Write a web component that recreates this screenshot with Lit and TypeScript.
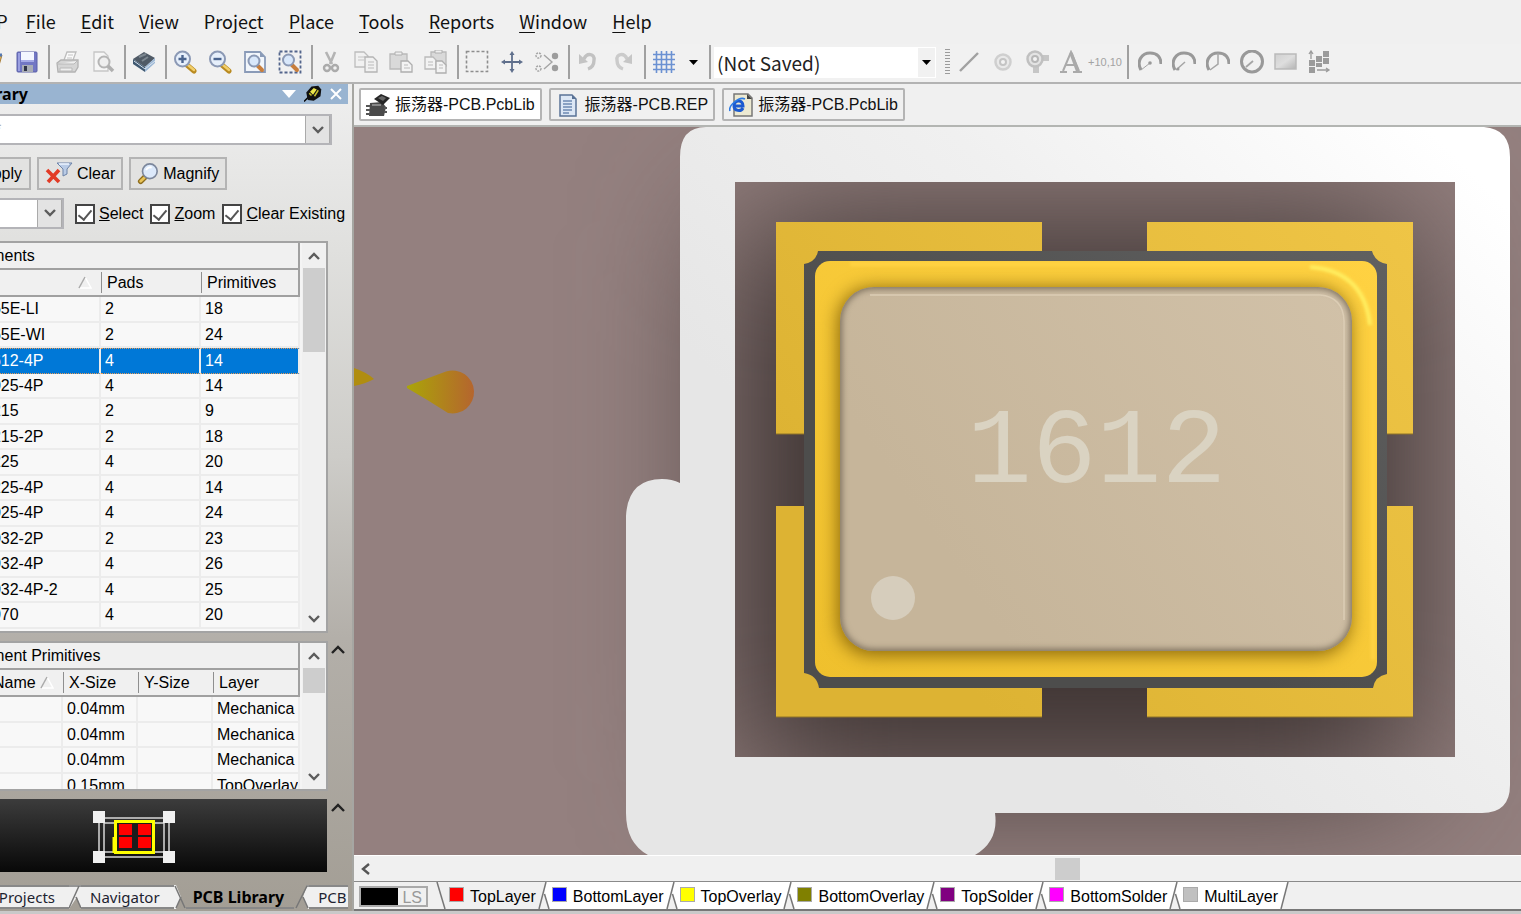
import { LitElement, html, css, svg, nothing } from "lit";
import { customElement, property } from "lit/decorators.js";
import { classMap } from "lit/directives/class-map.js";

const page = svg`<path d="M5 2h8l5 5v13H5z" fill="#f4f4f4" stroke="#b4b4b4" stroke-width="1.3"/>`;

const ICONS: Record<string, unknown> = {
  open: svg`<path d="M2 9h14l6-4-4 14H2z" fill="#e0b860" stroke="#a87d38"/><path d="M14 5h8" stroke="#5578b0" stroke-width="3"/>`,
  save: svg`<rect x="2" y="2" width="20" height="20" rx="1" fill="#7277c4" stroke="#5a60a8"/><rect x="6" y="2" width="13" height="9" fill="#f3f6ff"/><path d="M6 11h13" stroke="#a5aae6" stroke-width="2"/><rect x="7" y="15" width="11" height="7" fill="#a9adb5"/><rect x="9" y="16" width="3" height="5" fill="#2f3448"/><path d="M4 3v18" stroke="#a9adea" stroke-width="1.5"/>`,
  print: svg`<path d="M8 10 11 2h9l-3 8" fill="#fafafa" stroke="#bdbdbd" stroke-width="1.3"/><path d="M12 5h5M11 8h5" stroke="#c4c4c4"/><path d="M1 13 5 10h17v7l-3 5H2z" fill="#d5d5d5" stroke="#b2b2b2" stroke-width="1.3"/><path d="M2 14h16l3-3M4 18h12v3H4z" fill="#efefef" stroke="#b9b9b9"/>`,
  preview: svg`<path d="M3 2h10l4 4v15H3z" fill="#f6f6f6" stroke="#c6c6c6" stroke-width="1.3"/><circle cx="13" cy="12" r="5.5" fill="#efefef" stroke="#b5b5b5" stroke-width="2"/><path d="m17 16 5 5" stroke="#b0b0b0" stroke-width="3.5"/>`,
  book: svg`<path d="m1 9 11-7 11 6-10 9z" fill="#4f5a66"/><path d="m1 9 12 8v5L1 14z" fill="#3f5871"/><path d="m13 17 10-9v5l-10 9z" fill="#9db8d5"/><path d="m2 11 11 8 10-8" fill="none" stroke="#d9e4ef"/><path d="m7 7 7-3M10 11l6-4" stroke="#7c8790" stroke-width="2"/>`,
  zoomIn: svg`<path d="m14 15 7 6" stroke="#b98a20" stroke-width="5" stroke-linecap="round"/><path d="m15 15 6 5" stroke="#f2cf6b" stroke-width="2.4" stroke-linecap="round"/><circle cx="9.500" cy="9" r="7.500" fill="#e6effb" stroke="#8b99b5" stroke-width="2"/><path d="M5.500 9h8M9.500 5v8" stroke="#4a648f" stroke-width="2.400"/>`,
  zoomOut: svg`<path d="m14 15 7 6" stroke="#b98a20" stroke-width="5" stroke-linecap="round"/><path d="m15 15 6 5" stroke="#f2cf6b" stroke-width="2.4" stroke-linecap="round"/><circle cx="9.500" cy="9" r="7.500" fill="#e6effb" stroke="#8b99b5" stroke-width="2"/><path d="M5.500 9h8" stroke="#4a648f" stroke-width="2.400"/>`,
  zoomPage: svg`<path d="M2 2h15l5 5v15H2z" fill="#f2f6fb" stroke="#8a9bb8" stroke-width="1.800"/><path d="M17 2v5h5" fill="#8a9bb8"/><path d="m14 15 5 5" stroke="#c87e3c" stroke-width="4" stroke-linecap="round"/><circle cx="11" cy="11" r="5.500" fill="#d9e8fb" stroke="#8b99b5" stroke-width="2"/>`,
  zoomSel: svg`<rect x="1.500" y="1.500" width="21" height="21" fill="none" stroke="#53658c" stroke-width="1.800" stroke-dasharray="3 2"/><path d="m14 15 5 5" stroke="#c87e3c" stroke-width="4" stroke-linecap="round"/><circle cx="10.500" cy="10" r="5.500" fill="#d9e8fb" stroke="#8b99b5" stroke-width="2"/>`,
  cut: svg`<path d="m7 2 6 12M16 2l-5 12" stroke="#b4b4b4" stroke-width="2.600"/><circle cx="8" cy="18" r="3" fill="none" stroke="#ababab" stroke-width="2.400"/><circle cx="16" cy="18" r="3" fill="none" stroke="#ababab" stroke-width="2.400"/>`,
  copy: svg`<path d="M1 2h9l4 4v11H1z" fill="#f1f1f1" stroke="#bdbdbd" stroke-width="1.300"/><path d="M4 7h7M4 10h6" stroke="#c5c5c5"/><path d="M11 7h8l4 4v11H11z" fill="#f1f1f1" stroke="#b4b4b4" stroke-width="1.300"/><path d="M14 12h6M14 15h6M14 18h6" stroke="#bbb"/>`,
  paste: svg`<path d="M1 4h17v15H1z" fill="#d9d9d9" stroke="#b9b9b9" stroke-width="1.300"/><path d="M6 5V2h7v3z" fill="#efefef" stroke="#b0b0b0"/><path d="M12 11h7l4 4v7H12z" fill="#f3f3f3" stroke="#aeaeae" stroke-width="1.300"/><path d="M15 15h4M15 18h6" stroke="#bbb"/>`,
  pasteMulti: svg`<path d="M7 2h15v14H7z" fill="#d9d9d9" stroke="#b9b9b9" stroke-width="1.300"/><path d="M11 3V0h7v3z" fill="#efefef" stroke="#b0b0b0"/><path d="M1 7h8l3 3v9H1z" fill="#f3f3f3" stroke="#bababa" stroke-width="1.300"/><path d="M12 11h6l4 4v8H12z" fill="#f3f3f3" stroke="#aeaeae" stroke-width="1.300"/><path d="M4 12h5M4 15h5M15 15h4M15 18h4" stroke="#bbb"/>`,
  select: svg`<rect x="1.500" y="1.500" width="21" height="20" fill="none" stroke="#8e8e8e" stroke-width="1.600" stroke-dasharray="3 2"/>`,
  move: svg`<path d="M12 3v18M3 12h18" stroke="#5f6f8c" stroke-width="1.800"/><path d="m9.500 5 2.500-4 2.500 4zM9.500 19l2.500 4 2.500-4zM5 9.500 1 12l4 2.500zM19 9.500l4 2.500-4 2.500z" fill="#5f6f8c"/>`,
  deselect: svg`<path d="m9 5 8 7-8 7" fill="none" stroke="#a5a5a5" stroke-width="1.400"/><circle cx="3.500" cy="5.500" r="2.500" fill="none" stroke="#a5a5a5" stroke-width="1.500" stroke-dasharray="2 1"/><circle cx="3.500" cy="18.500" r="2.500" fill="none" stroke="#a5a5a5" stroke-width="1.500" stroke-dasharray="2 1"/><circle cx="20" cy="6" r="3.200" fill="#9d9d9d"/><circle cx="20" cy="18" r="3.200" fill="#9d9d9d"/>`,
  undo: svg`<path d="M8 9c3-7 11-5 10 1 0 5-3 8-6 9" fill="none" stroke="#c2c2c2" stroke-width="3.400"/><path d="M3 4v10l9-2z" fill="#c3c3c3"/>`,
  redo: svg`<path d="M16 9C13 2 5 4 6 10c0 5 3 8 6 9" fill="none" stroke="#cbcbcb" stroke-width="3.400"/><path d="M21 4v10l-9-2z" fill="#c6c6c6"/>`,
  grid: svg`<path d="M1 4.500h22M1 9.500h22M1 14.500h22M1 19.500h22M4.500 1v22M9.500 1v22M14.500 1v22M19.500 1v22" stroke="#6b91d2" stroke-width="1.600"/>`,
  line: svg`<path d="M3 21 21 3" stroke="#a1a1a1" stroke-width="2.400"/>`,
  pad: svg`<circle cx="12" cy="12" r="7.500" fill="#e9e9e9" stroke="#cfcfcf" stroke-width="2.500"/><circle cx="12" cy="12" r="3" fill="#f3f3f3" stroke="#c4c4c4" stroke-width="2"/>`,
  via: svg`<path d="M8 14h6v9H8zM16 5h8v6h-8z" fill="#c6c6c6"/><circle cx="10" cy="9" r="7.500" fill="#e3e3e3" stroke="#c0c0c0" stroke-width="2.500"/><circle cx="10" cy="9" r="3" fill="#f3f3f3" stroke="#b7b7b7" stroke-width="2"/>`,
  letter: svg`<path d="M1 22h7M14 22h9M4 21 12 2l8 19M7 15h9" fill="none" stroke="#aaa" stroke-width="2"/><path d="m12 3 7 19" stroke="#aaa" stroke-width="3.500"/>`,
  arc1: svg`<path d="M3 20C-2 11 4 3 12 3s11 5 11 11" fill="none" stroke="#999" stroke-width="3"/><path d="m3 20 9-7" stroke="#a5a5a5"/><circle cx="12" cy="13" r="1.800" fill="#999"/>`,
  arc2: svg`<path d="M3 20C-2 11 4 3 12 3s11 5 11 11" fill="none" stroke="#999" stroke-width="3"/><path d="m4 20 9-8" stroke="#a5a5a5" stroke-width="1.500"/><circle cx="6" cy="19" r="1.500" fill="#999"/>`,
  arc3: svg`<path d="M3 20C-2 11 4 3 12 3s11 5 11 11" fill="none" stroke="#999" stroke-width="3"/><path d="m4 20 8-6V3" fill="none" stroke="#a5a5a5" stroke-width="1.500"/>`,
  circle: svg`<circle cx="12" cy="11.500" r="10.500" fill="none" stroke="#999" stroke-width="3"/><path d="m6 17 7-6" stroke="#a5a5a5" stroke-width="1.800"/>`,
  fill: svg`<defs><linearGradient id="sheen" x1="0" y1="0" x2="1" y2="1"><stop offset="0" stop-color="#d0d0d0"/><stop offset=".5" stop-color="#dedede"/><stop offset="1" stop-color="#b4b4b4"/></linearGradient></defs><rect x="1" y="4" width="21" height="15" fill="url(#sheen)" stroke="#bababa" stroke-width="1.500"/>`,
  array: svg`<path d="M15 1h6v6h-6zM8 6h6v6H8zM15 8h6v6h-6zM1 10h6v6H1zM8 13h6v4H8zM1 17h6v6H1z" fill="#9b9b9b"/><path d="M3 9V2M1 4l2-3 2 3M9 20h12m-3-2 3 2-3 2" fill="none" stroke="#9b9b9b" stroke-width="1.300"/>`,
  clear: svg`<path d="M10 1h15l-5 6v5l-4 2V7z" fill="#b9cbe6" stroke="#6d83a8"/><path d="M12 2h10" stroke="#eef4ff" stroke-width="1.500"/><path d="m0 8 12 12M12 8 1 20" stroke="#e23b26" stroke-width="3.600"/>`,
  magnify: svg`<path d="m4 20 5-5" stroke="#8d6c1c" stroke-width="6" stroke-linecap="round"/><path d="m4 20 4-4" stroke="#e8c357" stroke-width="3" stroke-linecap="round"/><circle cx="14" cy="9" r="8" fill="#dce9fb" stroke="#7c879c" stroke-width="1.800"/><path d="M10 8c1-3 4-4 6-3" stroke="#fff" stroke-width="2" fill="none"/>`,
  chip: svg`<path d="M4 10 16 9l4 5-2 9H3z" fill="#4a4a4a"/><path d="m8 6 7-5 9 4-7 7z" fill="#262626"/><path d="m12 5 4-2 4 2-3 3z" fill="#666"/><path d="M0 13h4M0 17h4M0 21h4M18 15h3M18 19h3" stroke="#555" stroke-width="2"/><path d="M6 12h9" stroke="#888" stroke-width="2"/>`,
  report: svg`<path d="M4 2h12l4 4v17H4z" fill="#dce7f5" stroke="#5a7396" stroke-width="1.500"/><path d="M16 2v4h4" fill="#5a7396"/><path d="M7 8h9M7 11h9M7 14h9M7 17h9M7 20h6" stroke="#6d8ab2" stroke-width="1.300"/>`,
  web: svg`<path d="M5 1h14l4 4v18H5z" fill="#ece9d2" stroke="#777" stroke-width="1.500"/><path d="M18 1v5h5" fill="#444"/><path d="M14 15c-2 4-9 3-9-2 0-6 9-7 9 0H6" fill="none" stroke="#1c5bd0" stroke-width="3"/><path d="M1 18C-1 13 10 3 16 6" fill="none" stroke="#2b7be6" stroke-width="1.600"/>`,
  pin: svg`<path d="m0 22 7-7" stroke="#000" stroke-width="2"/><path d="M3 10 10 2l9-1 4 5-1 9-9 6-8-1z" fill="#111"/><path d="m8 9 5-5 4 2-5 7z" fill="#ece64a"/><path d="m14 15 5-8M10 14l-3-3" stroke="#c8c02c" stroke-width="2"/>`,
};

const icon = (name: string, w = 24, h = 24) => html`<svg class="ico" width=${w} height=${h} viewBox="0 0 24 24" aria-hidden="true">${ICONS[name] ?? page}</svg>`;
const chevron = (dir: "up" | "down") => html`<svg width="12" height="8" viewBox="0 0 12 8" aria-hidden="true">
  <path d=${dir === "up" ? "M1 7 6 2l5 5" : "M1 1l5 5 5-5"} fill="none" stroke="#5c5c5c" stroke-width="2.400"/></svg>`;

const MENU: [string, string, string][] = [
  ["DXP", "", ""], ["", "F", "ile"], ["", "E", "dit"], ["", "V", "iew"], ["Proje", "c", "t"], ["", "P", "lace"],
  ["", "T", "ools"], ["", "R", "eports"], ["", "W", "indow"], ["", "H", "elp"],
];

const TOOLS = ["open", "save", "|", "print", "preview", "|", "book", "|", "zoomIn", "zoomOut", "zoomPage", "zoomSel", "|",
  "cut", "copy", "paste", "pasteMulti", "|", "select", "move", "deselect", "|", "undo", "redo", "|", "grid"];
const DRAW_TOOLS = ["line", "pad", "via", "letter", "coord", "|", "arc1", "arc2", "arc3", "circle", "fill", "array"];

const shared = css`
  * { box-sizing: border-box; }
  button, input, select { font: inherit; color: inherit; margin: 0; padding: 0; border: 0; background: none; border-radius: 0; outline: 0; }
  svg { display: block; flex: none; }
`;

@customElement("tool-bar")
export class ToolBar extends LitElement {
  static styles = [shared, css`
    :host { display: flex; height: 38px; margin-left: -26px; padding-bottom: 2px; align-items: center; background: #f1f1f1; }
    .tool { width: 35px; height: 34px; flex: none; display: grid; place-items: center; }
    .draw { display: flex; align-items: center; }
    .draw .tool { width: 34px; }
    .draw .sep { margin: 0 4px 0 5px; }
    .sep { width: 2px; height: 34px; margin-left: 4px; flex: none; background: #a0a0a0; }
    .drop { width: 24px; height: 34px; display: grid; place-items: center; }
    .combo { display: grid; width: 222px; height: 31px; flex: none; margin: 0 9px 0 3px; background: #fff; border: 1px solid #fff; align-items: center; }
    .combo > * { grid-area: 1 / 1; }
    .combo select { appearance: none; width: 100%; height: 29px; padding-left: 2px; font-family: "Noto Sans CJK SC", sans-serif; font-size: 19px; color: #222; }
    .combo .arrow { justify-self: end; width: 17px; height: 29px; background: #f1f1f1; display: grid; place-items: center; pointer-events: none; }
    .grip { width: 5px; height: 26px; margin: 0 2px 0 0; flex: none; background: repeating-linear-gradient(#9c9c9c 0 1px, transparent 1px 3px); }
    .coord { color: #a3a3a3; font: 11px "Liberation Sans", sans-serif; }
  `];
  private tool(n: string) {
    if (n === "|") return html`<span class="sep"></span>`;
    return html`<button class="tool" aria-label=${n}>${n === "coord" ? html`<span class="coord">+10,10</span>` : icon(n)}</button>`;
  }
  render() {
    const tri = html`<svg width="9" height="5" viewBox="0 0 9 5"><path d="M0 0h9L4.500 5z" fill="#000"/></svg>`;
    return html`${TOOLS.map((t) => this.tool(t))}
      <button class="drop" aria-label="Grid options">${tri}</button><span class="sep"></span>
      <label class="combo"><select aria-label="View"><option>(Not Saved)</option></select><span class="arrow">${tri}</span></label>
      <span class="grip"></span>
      <div class="draw">${DRAW_TOOLS.map((t) => this.tool(t))}</div>`;
  }
}

@customElement("data-grid")
export class DataGrid extends LitElement {
  @property() caption = "";
  @property({ attribute: false }) columns: { label: string; width: number }[] = [];
  @property({ attribute: false }) rows: string[][] = [];
  @property({ type: Number }) selected = -1;
  @property({ type: Number }) indent = 30;
  @property({ type: Number }) thumb = 84;
  static styles = [shared, css`
    :host { display: flex; overflow: hidden; border: 2px solid #a3a3a3; border-left: 0; background: #f0f0f0; font: 16px/24px "Liberation Sans", sans-serif; }
    .view { flex: 1; overflow: hidden; background: #f8f8f8; border-right: 2px solid #f4f4f4; }
    table { width: 100%; table-layout: fixed; border-collapse: separate; border-spacing: 0; }
    th { font-weight: normal; text-align: left; padding: 0; height: 27px; background: #f0f0f0; border-bottom: 2px solid #a0a0a0; white-space: nowrap; }
    th.cap { border-right: 2px solid #a0a0a0; padding: 1px 0 0 24px; }
    th.col:last-child { border-right: 2px solid #a0a0a0; }
    .cell { display: flex; align-items: center; justify-content: space-between; height: 21px; padding-left: 5px; border-left: 1px solid #8f8f8f; }
    th:first-child .cell { border-left: 0; }
    .mark { margin-right: 9px; }
    td { height: 26px; padding: 0 0 0 4px; white-space: nowrap; overflow: hidden; border-bottom: 2px solid #ececec; border-right: 2px solid #ececec; line-height: 24px; }
    tr:nth-child(even) td { height: 25px; line-height: 23px; }
    td:first-child { padding-left: 63px; }
    .sel td { background: #0078d7; color: #fff; border-top: 1px dotted #e59b58; border-bottom: 1px dotted #e59b58; }
    .bar { width: 24px; display: flex; flex-direction: column; align-items: center; justify-content: space-between; background: #f0f0f0; }
    .arrow { width: 24px; height: 25px; display: grid; place-items: center; flex: none; }
    .thumb { width: 22px; background: #cdcdcd; margin-bottom: auto; flex: none; }
  `];
  render() {
    const mark = html`<svg class="mark" width="14" height="13" viewBox="0 0 14 13"><path d="M7 1 13 12H2" fill="none" stroke="#fff" stroke-width="1.500"/><path d="M1 12 7 1" stroke="#aaa" stroke-width="1.500"/></svg>`;
    return html`<div class="view"><table>
        <colgroup>${this.columns.map((c) => html`<col style="width:${c.width}px">`)}</colgroup>
        <thead>
          <tr><th class="cap" colspan=${this.columns.length}>${this.caption}</th></tr>
          <tr>${this.columns.map((c, i) => i === 0
            ? html`<th class="col"><div class="cell" style="padding-left:${this.indent}px">${c.label}${mark}</div></th>`
            : html`<th class="col"><div class="cell">${c.label}</div></th>`)}</tr>
        </thead>
        <tbody>${this.rows.map((r, i) => html`<tr class=${i === this.selected ? "sel" : ""}>${r.map((v) => html`<td>${v}</td>`)}</tr>`)}</tbody>
      </table></div>
      <div class="bar"><button class="arrow" aria-label="Scroll up">${chevron("up")}</button>
        <div class="thumb" style="height:${this.thumb}px"></div>
        <button class="arrow" aria-label="Scroll down">${chevron("down")}</button></div>`;
  }
}

const COMPONENTS = [
  ["165E-LI", "2", "18"], ["165E-WI", "2", "24"], ["1612-4P", "4", "14"], ["2025-4P", "4", "14"], ["3215", "2", "9"],
  ["3215-2P", "2", "18"], ["3225", "4", "20"], ["3225-4P", "4", "14"], ["2025-4P", "4", "24"], ["5032-2P", "2", "23"],
  ["5032-4P", "4", "26"], ["5032-4P-2", "4", "25"], ["7070", "4", "20"],
];
const PRIMITIVES = [["", "0.04mm", "", "Mechanica"], ["", "0.04mm", "", "Mechanica"], ["", "0.04mm", "", "Mechanica"], ["", "0.15mm", "", "TopOverlay"]];

@customElement("library-panel")
export class LibraryPanel extends LitElement {
  static styles = [shared, css`
    :host { display: block; overflow: hidden; border-right: 2px solid #a6a6a2; background: linear-gradient(#efefef, #e0e0de 20%, #cdccc8 45%, #b3afa9 67%, #a39e95); font: 16px/20px "Liberation Sans", sans-serif; color: #000; }
    .inner { display: flex; flex-direction: column; height: 100%; margin-left: -80px; padding-right: 4px; }
    .title { display: flex; align-items: center; height: 20px; background: #99b4d1; padding-right: 6px; gap: 8px; }
    .title h2 { margin: 0; flex: 1; font: bold 16px/20px "Noto Sans", sans-serif; text-align: right; padding-right: 246px; white-space: nowrap; }
    .combo { display: flex; border: 2px solid #b4b4b8; background: #fff; }
    .combo button { width: 25px; background: #e3e3e3; border-left: 1px solid #aaa; box-shadow: inset -1px 0 #aaa; display: grid; place-items: center; }
    .combo input { flex: 1; min-width: 0; padding-left: 74px; }
    .mask { height: 31px; margin: 10px 16px 0 0; }
    .mask input { padding-left: 73px; color: #aaa; }
    .buttons { display: flex; gap: 6px; margin-top: 12px; height: 33px; }
    .btn { border: 2px solid #b4b4b4; background: #e2e2e1; display: flex; align-items: center; gap: 4px; padding: 0 6px; }
    .btn.apply { width: 111px; justify-content: flex-end; padding-right: 7px; }
    .options { display: flex; align-items: center; margin-top: 7px; height: 32px; }
    .scope { width: 144px; height: 31px; margin-right: 11px; }
    .check { display: flex; align-items: center; gap: 4px; margin-right: 7px; padding-top: 2px; white-space: nowrap; }
    .check:last-child { margin-right: 0; }
    .check input { appearance: none; width: 20px; height: 20px; border: 2px solid #444; background: #fff; display: grid; place-items: center; }
    .check input::before { content: ""; width: 6px; height: 11px; border: solid #555; border-width: 0 2px 2px 0; transform: translateY(-1px) rotate(40deg); }
    .row { display: flex; gap: 3px; }
    .row > :first-child { flex: 1; }
    .row.components { flex: 1; min-height: 0; margin: 12px 20px 0 0; }
    .row.prims { margin: 8px 3px 0 0; height: 150px; }
    .row.preview { margin: 8px 3px 13px 0; height: 73px; }
    .fold { height: 16px; width: 14px; display: grid; place-items: center; }
    .screen { background: linear-gradient(#3c3c3c, #080808); display: flex; justify-content: flex-end; align-items: center; padding: 4px 151px 0 0; margin-right: 1px; }
    .tabs { display: flex; height: 24px; margin: 0 0 2px 56px; overflow: hidden; font-family: "Noto Sans", sans-serif; font-size: 15px; }
    .tab { background: #f0f0f0; border-top: 2px solid #888; border-bottom: 2px solid #888; padding: 0 14px 0 9px; line-height: 20px; color: #1d2330; white-space: nowrap; flex: none; }
    .tab.projects { padding: 0 14px 0 0; width: 93px; text-align: right; }
    .tab.on { background: none; border-top-color: transparent; font-weight: bold; font-size: 16px; color: #000; padding: 0 10px 0 7px; }
  `];
  render() {
    const fold = html`<svg width="14" height="9" viewBox="0 0 14 9"><path d="M1 8 7 2l6 6" fill="none" stroke="#222" stroke-width="2.400"/></svg>`;
    const square = (x: number, y: number) => svg`<rect x=${x} y=${y} width="12" height="12" fill="#f0f0f0"/>`;
    return html`<div class="inner">
      <div class="title"><h2>PCB Library</h2>
        <svg width="14" height="8" viewBox="0 0 14 8"><path d="M0 0h14L7 8z" fill="#fff"/></svg>
        ${icon("pin", 18, 18)}
        <svg width="12" height="12" viewBox="0 0 12 12"><path d="m1 1 10 10M11 1 1 11" stroke="#fff" stroke-width="2"/></svg>
      </div>
      <div class="combo mask"><input aria-label="Mask" value="*"><button aria-label="Open mask list">${chevron("down")}</button></div>
      <div class="buttons">
        <button class="btn apply">Apply</button>
        <button class="btn">${icon("clear", 28, 24)}Clear</button>
        <button class="btn">${icon("magnify", 22, 24)}Magnify</button>
      </div>
      <div class="options">
        <div class="combo scope"><input aria-label="Scope"><button aria-label="Open scope list">${chevron("down")}</button></div>
        <label class="check"><input type="checkbox" checked><span><u>S</u>elect</span></label>
        <label class="check"><input type="checkbox" checked><span><u>Z</u>oom</span></label>
        <label class="check"><input type="checkbox" checked><span><u>C</u>lear Existing</span></label>
      </div>
      <div class="row components"><data-grid caption="Components" .columns=${[{ label: "Name", width: 181 }, { label: "Pads", width: 100 }, { label: "Primitives", width: 99 }]}
        .rows=${COMPONENTS} .selected=${2} .indent=${30}></data-grid></div>
      <div class="row prims"><data-grid caption="Component Primitives" .thumb=${25} .indent=${73}
        .columns=${[{ label: "Name", width: 143 }, { label: "X-Size", width: 75 }, { label: "Y-Size", width: 75 }, { label: "Layer", width: 87 }]} .rows=${PRIMITIVES}></data-grid>
        <button class="fold" aria-label="Collapse primitives">${fold}</button></div>
      <div class="row preview"><div class="screen"><svg width="84" height="53" viewBox="0 0 84 53">
          <path d="M7 7h70v39H7zM12 12h60v29H12z" fill="none" stroke="#d8d8d8" stroke-width="1.500"/>
          <rect x="23.500" y="10.500" width="38" height="31" fill="#1c1c1c" stroke="#ffff00" stroke-width="3"/><path d="M22 26v16" stroke="#ffff00" stroke-width="3"/>
          <path d="M27 13h13v11H27zM46 13h13v11H46zM27 26h13v11H27zM46 26h13v11H46z" fill="#f00"/>
          ${square(1, 0)}${square(71, 0)}${square(1, 40)}${square(71, 40)}
        </svg></div><button class="fold" aria-label="Collapse preview">${fold}</button></div>
      <div class="tabs">
        <button class="tab projects">Projects</button>
        <svg width="12" height="24" viewBox="0 0 12 24"><path d="M0 0h12v24L8 12 0 24z" fill="#f0f0f0"/><path d="M0 1h12M0 23 10 1M7 12l5 11" fill="none" stroke="#777" stroke-width="1.500"/></svg>
        <button class="tab">Navigator</button>
        <svg width="12" height="24" viewBox="0 0 12 24"><path d="M0 0h2l5 12-5 12H0z" fill="#f0f0f0"/><path d="m1 1 10 22M7 12 2 23" fill="none" stroke="#777" stroke-width="1.500"/></svg>
        <button class="tab on">PCB Library</button>
        <svg width="15" height="24" viewBox="0 0 15 24"><path d="m13 0-4 12 5 12h1V0z" fill="#f0f0f0"/><path d="M2 23 13 1h2M9 12l5 11" fill="none" stroke="#777" stroke-width="1.500"/></svg>
        <button class="tab">PCB</button>
      </div>
    </div>`;
  }
}

const LAYERS: [string, string][] = [["TopLayer", "#ff0000"], ["BottomLayer", "#0000ff"], ["TopOverlay", "#ffff00"], ["BottomOverlay", "#808000"],
  ["TopSolder", "#800080"], ["BottomSolder", "#ff00ff"], ["MultiLayer", "#c0c0c0"]];

@customElement("board-editor")
export class BoardEditor extends LitElement {
  static styles = [shared, css`
    :host { display: flex; flex-direction: column; min-width: 0; overflow: hidden; background: #f0f0f0; font: 16px/20px "Liberation Sans", "Noto Sans CJK SC", sans-serif; color: #000; }
    .docs { display: flex; gap: 7px; padding: 4px 5px; border-bottom: 2px solid #b3b5b2; }
    .doc { height: 33px; border: 2px solid #b4b4b4; border-radius: 2px; background: #f0f0f0; display: flex; align-items: center; gap: 5px; padding: 0 5px; white-space: nowrap; color: #111; }
    .doc.on { background: #fff; }
    .board { flex: 1; min-height: 0; overflow: hidden; background: #94807f; }
    .board svg { width: 100%; height: 100%; }
    .board filter { color-interpolation-filters: sRGB; }
    .mark { font-family: "Liberation Mono", monospace; font-size: 108px; fill: #dad3c2; }
    .hscroll { display: flex; align-items: center; height: 26px; flex: none; border-top: 1px solid #fff; padding-left: 7px; }
    .hthumb { width: 25px; height: 22px; background: #cdcdcd; margin-left: 59%; }
    .layers { display: flex; height: 30px; flex: none; border-top: 1px solid #8a8a8a; border-bottom: 2px solid #777; overflow: hidden; padding-left: 5px; }
    .set { display: flex; height: 21px; margin: 4px 5px 0 0; border: 2px solid #aaa; color: #999; line-height: 19px; width: 69px; justify-content: space-between; padding-right: 4px; }
    .set::before { content: ""; width: 37px; background: #000; }
    .layer { display: flex; align-items: center; gap: 6px; padding: 2px 2px 0; background: #fff; white-space: nowrap; flex: none; }
    .layer.on { background: #f0f0f0; }
    .swatch { width: 15px; height: 15px; border: 1px solid #aaa; margin-top: -4px; }
  `];
  render() {
    const edge = (first: boolean, last: boolean) => html`<svg width="12" height="27" viewBox="0 0 12 27">
      <path d="M0 0h8L1 27H0z" fill=${first ? "#f0f0f0" : "#fff"}/>${last ? nothing : svg`<path d="M8 0h4v27h-1L6.500 12z" fill="#fff"/>`}
      <path d=${last ? "M1 27 8 0" : "M1 27 8 0M6.500 12 11 27"} fill="none" stroke="#777" stroke-width="1.500"/></svg>`;
    return html`
      <div class="docs">
        <button class="doc on">${icon("chip")}<span>振荡器-PCB.PcbLib</span></button>
        <button class="doc">${icon("report")}<span>振荡器-PCB.REP</span></button>
        <button class="doc">${icon("web")}<span>振荡器-PCB.PcbLib</span></button>
      </div>
      <div class="board"><svg viewBox="354 127 1167 728" preserveAspectRatio="xMinYMin slice">
        <defs>
          <filter id="soft" x="-50%" y="-50%" width="200%" height="200%"><feGaussianBlur stdDeviation="75"/></filter>
          <filter id="near" x="-20%" y="-20%" width="140%" height="140%"><feGaussianBlur stdDeviation="9"/></filter>
          <filter id="edge" x="-20%" y="-20%" width="140%" height="140%"><feGaussianBlur stdDeviation="3"/></filter>
          <filter id="gloss" x="-20%" y="-20%" width="140%" height="140%"><feGaussianBlur stdDeviation="1.500"/></filter>
          <linearGradient id="silk" gradientUnits="userSpaceOnUse" x1="900" y1="560" x2="1380" y2="80"><stop offset="0" stop-color="#e6e6e6"/><stop offset=".5" stop-color="#f0f0f0"/><stop offset="1" stop-color="#fff"/></linearGradient>
          <linearGradient id="padFill" gradientUnits="userSpaceOnUse" x1="900" y1="600" x2="1400" y2="200"><stop offset="0" stop-color="#ddb333"/><stop offset="1" stop-color="#efc546"/></linearGradient>
          <linearGradient id="lid" gradientUnits="userSpaceOnUse" x1="950" y1="560" x2="1340" y2="290"><stop offset="0" stop-color="#c6b59a"/><stop offset="1" stop-color="#d1c1a8"/></linearGradient>
          <linearGradient id="ring" x1="0" y1="1" x2="1" y2="0"><stop offset=".4" stop-color="#4d4d4c"/><stop offset="1" stop-color="#606060"/></linearGradient>
          <linearGradient id="gold" x1="0" y1="1" x2="1" y2="0"><stop offset="0" stop-color="#efc02d"/><stop offset="1" stop-color="#ffd242"/></linearGradient>
          <linearGradient id="drop"><stop offset="0" stop-color="#aaa508"/><stop offset="1" stop-color="#b5652e"/></linearGradient>
          <clipPath id="goldClip"><rect x="815" y="261" width="562" height="416" rx="15"/></clipPath>
          <clipPath id="lidClip"><rect x="840" y="287" width="512" height="364" rx="34"/></clipPath>
        </defs>
        <rect x="354" y="127" width="1800" height="1200" fill="#94807f"/>
        <rect x="732" y="220" width="683" height="565" rx="30" fill="#3c3231" filter="url(#soft)"/>
        <path d="M354 368q12 4 20 11-9 5-20 7z" fill="#b08d10"/>
        <path d="M407 386 446 371.500A21.500 21.500 0 1 1 448 413Q428 400 407 388z" fill="url(#drop)"/>
        <path fill-rule="evenodd" fill="url(#silk)" d="M680 157q0-30 26-30H1484q26 2 26 30V785q0 28-28 28H995q4 28-20 42H648q-22-12-22-42V516Q628 479 662 479q10 0 18 4zM735 182V757H1455V182z"/>
        <path d="M776 222H1042V270H824V434H776zM1147 222H1413V434H1368V270H1147zM776 506H824V670H1042V717H776zM1368 506H1413V717H1147V670H1368z" fill="url(#padFill)"/>
        <path d="M776 434h28M1387 434h26M776 717h266M1147 717h266" stroke="#8e7328" stroke-width="1"/>
        <path d="M818 251H1372q3 11 15 13V674q-12 2-14 14H819q-2-13-15-15V264q12-2 14-13z" fill="url(#ring)"/>
        <rect x="815" y="261" width="562" height="416" rx="15" fill="url(#gold)"/>
        <g clip-path="url(#goldClip)"><rect x="838" y="288" width="512" height="367" rx="34" fill="#8a680a" filter="url(#near)"/>
          <path d="M850 264H1300q70 0 73 66V660" fill="none" stroke="#ffd242" stroke-width="5" filter="url(#gloss)"/>
          <path d="M1310 267q54 4 60 58" fill="none" stroke="#ffee60" stroke-width="4" filter="url(#gloss)"/></g>
        <rect x="840" y="287" width="512" height="364" rx="34" fill="url(#lid)"/>
        <g clip-path="url(#lidClip)"><rect x="838" y="285" width="516" height="368" rx="36" fill="none" stroke="#7d705d" stroke-width="8" filter="url(#edge)"/></g>
        <path d="M870 295H1320q23 2 24 26V620" fill="none" stroke="#dccdb5" stroke-width="1.500"/>
        <circle cx="893" cy="598" r="22" fill="#d6cdbc"/>
        <text class="mark" x="967" y="482">1612</text>
      </svg></div>
      <div class="hscroll"><svg width="10" height="12" viewBox="0 0 10 12"><path d="M8 1 2 6l6 5" fill="none" stroke="#555" stroke-width="2.400"/></svg><div class="hthumb"></div></div>
      <div class="layers"><button class="set">LS</button>
        <svg width="14" height="27" viewBox="0 0 14 27"><path d="m4 0 8 27" stroke="#777" stroke-width="1.500"/></svg>
        ${LAYERS.map(([name, color], i) => html`<button class=${classMap({ layer: true, on: i === 0 })}><span class="swatch" style="background:${color}"></span>${name}</button>${edge(i === 0, i === LAYERS.length - 1)}`)}
      </div>`;
  }
}

@customElement("app-root")
export class AppRoot extends LitElement {
  static styles = [shared, css`
    :host { display: flex; flex-direction: column; height: 100vh; overflow: hidden; background: #f0f0f0; }
    .menu { display: flex; align-items: center; gap: 25px; height: 44px; padding: 0 0 2px; margin-left: -26px; flex: none; font: 18px/24px "Noto Sans CJK SC", sans-serif; color: #111; }
    .menu button { flex: none; }
    .menu .app { margin-right: -7px; }
    .menu u { text-underline-offset: 3px; }
    tool-bar { flex: none; }
    .work { flex: 1; min-height: 0; display: grid; grid-template-columns: 354px minmax(0, 1fr); grid-template-rows: minmax(0, 1fr); border-top: 2px solid #b3b3b3; border-bottom: 3px solid #c9c9c9; }
  `];
  render() {
    return html`<nav class="menu">${MENU.map(([a, u, b], i) => html`<button class=${i === 0 ? "app" : ""}>${a}${u ? html`<u>${u}</u>` : nothing}${b}</button>`)}</nav>
      <tool-bar></tool-bar>
      <div class="work"><library-panel></library-panel><board-editor></board-editor></div>`;
  }
}
